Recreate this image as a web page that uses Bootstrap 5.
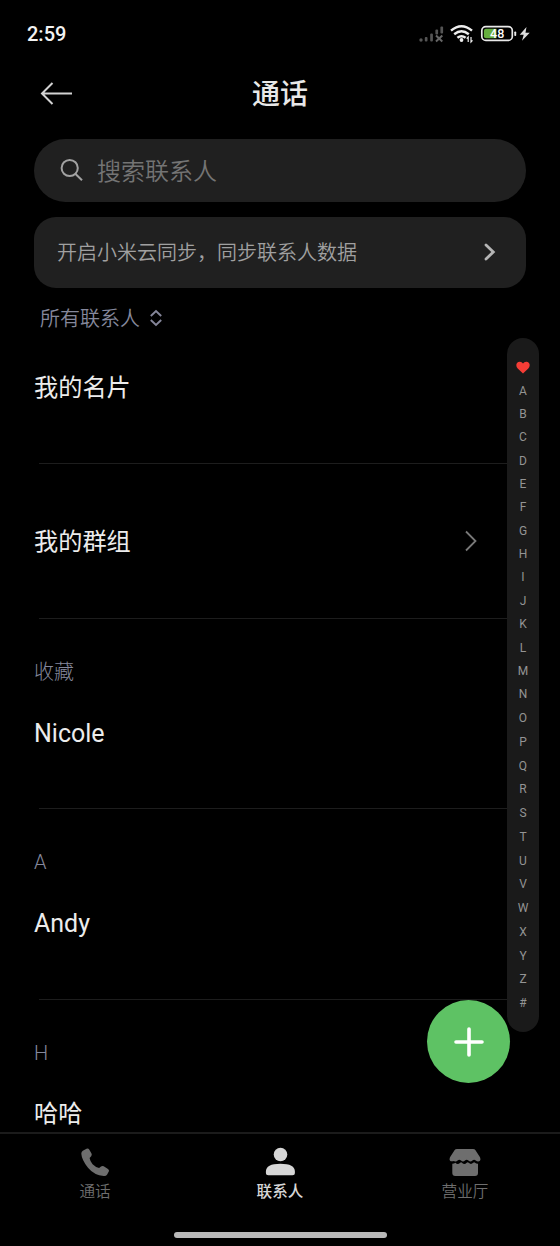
<!DOCTYPE html>
<html lang="zh-CN">
<head>
<meta charset="utf-8">
<meta name="viewport" content="width=device-width, initial-scale=1">
<title>通话</title>
<link href="https://cdn.jsdelivr.net/npm/bootstrap@5.3.0/dist/css/bootstrap.min.css" rel="stylesheet">
<style>
body { background:#000; color:#e8e8e8; font-family:Roboto,"Noto Sans CJK SC",sans-serif; font-weight:400; }
svg { display:block; flex:none; }
.screen { height:1246px; }
.statusbar { height:66px; padding:2px 28px 0 27px; }
.clock { font:500 20px/24px Roboto,sans-serif; color:#f2f2f2; }
.topbar { height:56px; padding:0 40px; }
.topbar h1 { font-size:28px; line-height:40px; font-weight:500; padding-top:3px; }
.side { width:33px; }
.search { height:63px; margin:17px 34px 0; padding:0 26px; border-radius:31.5px; background:#202020; color:#747474; font-size:24px; font-weight:350; gap:14px; }
.search span { padding-top:3px; }
.sync { height:71px; margin:15px 34px 0; padding:0 30px 0 23px; border-radius:22px; background:#202020; color:#a0a0a0; font-size:20px; font-weight:350; }
.sync span { padding-top:2px; }
.filter { height:52px; padding:8px 40px 0; gap:10px; color:#85889c; font-size:20px; font-weight:350; line-height:30px; }
.filter span { padding-top:2px; }
.contacts { height:793px; }
.entry { margin-left:39px; margin-right:53px; border-bottom:1px solid #1d1d1d; }
.entry > * { margin-left:-5px; }
.own-card { height:124px; padding-top:30px; }
.groups { height:155px; padding-right:30px; }
.groups .person { padding-top:3px; }
.group-block { height:190.5px; padding-top:38px; }
.tag { font-size:20px; line-height:30px; font-weight:300; color:#85889c; }
.person { font-size:24.2px; line-height:36px; color:#ececec; }
.latin { font-size:25px; }
.tag + .person { margin-top:28px; }
.tag + .latin { margin-top:29px; }
.az { top:338px; left:507px; width:32px; height:694px; padding-top:18.2px; border-radius:16px; background:#1a1a1a; color:#949494; font-size:12px; }
.az span { height:23.37px; line-height:23.37px; flex:none; }
.az span:nth-child(n+15) { height:23.78px; line-height:23.78px; }
.fab { top:1000px; left:427px; width:83px; height:83px; background:#5ec264; border:0; }
.tabs { height:114px; border-top:2px solid #1b1b1b; color:#6e6e6e; }
.tabs a { color:inherit; font-size:15.6px; line-height:22px; width:70px; }
.tabs a span { padding-top:2px; font-weight:350; }
.tabs .current { color:#d6d6d6; }
.tabs .current span { font-weight:500; }
.tabrow { padding:13px 60px 0 60px; }
.homebar { width:213px; height:6px; border-radius:3px; background:#b9b9b9; margin-bottom:8px; }
</style>
</head>
<body>
<div class="screen position-relative d-flex flex-column overflow-hidden">
  <header class="statusbar d-flex align-items-center justify-content-between">
    <span class="clock">2:59</span>
    <svg width="114" height="24" viewBox="418 22 114 24">
      <g fill="#555"><circle cx="421" cy="40" r="1.7"/><rect x="424.8" y="37" width="2.7" height="4.5" rx="1"/><rect x="430.2" y="33.5" width="2.7" height="8" rx="1"/><rect x="435.4" y="29.5" width="2.7" height="5" rx="1"/><rect x="440.4" y="26.5" width="2.7" height="7" rx="1"/></g>
      <path d="M436 35.5l6.3 6M442.3 35.5l-6.3 6" stroke="#666" stroke-width="2"/>
      <g fill="none" stroke="#eee" stroke-width="2.4"><path d="M451 30.700q10.500-8.800 21 0"/><path d="M454.200 34.300q7.300-6 14.600 0"/><path d="M457.400 37.800q4.100-3.300 8.200 0"/></g>
      <circle cx="461.500" cy="40" r="1.900" fill="#eee"/>
      <path d="M468.200 42v-5l-1.500 1.700M471 37v5l1.500-1.700" fill="none" stroke="#eee" stroke-width="1.200"/>
      <rect x="481.800" y="26.700" width="30.500" height="13.700" rx="4" fill="#000" stroke="#e9e9e9" stroke-width="1.700"/>
      <path d="M486 28.800h10.500v9.500H486q-2.100 0-2.100-2v-5.500q0-2 2.100-2z" fill="#65ad3e"/>
      <rect x="514.300" y="31.500" width="1.900" height="4.500" rx=".8" fill="#e9e9e9"/>
      <text x="497.200" y="38" text-anchor="middle" font-family="Roboto,sans-serif" font-size="12.500" font-weight="500" fill="#fff">48</text>
      <path d="M526.500 27l-6.800 7.700h4l-1.700 6 7.700-7.900h-4.200z" fill="#ddd"/>
    </svg>
  </header>
  <div class="topbar d-flex align-items-center justify-content-between">
    <svg class="side" height="24" viewBox="0 0 33 24" fill="none" stroke="#d2d2d2" stroke-width="2"><path d="M32 11.500H2M12.500 1L2 11.500 12.500 22"/></svg>
    <h1 class="m-0">通话</h1>
    <span class="side"></span>
  </div>
  <div class="search d-flex align-items-center">
    <svg width="23" height="24" viewBox="0 0 23 24" fill="none" stroke="#a2a2a2" stroke-width="2"><circle cx="9.700" cy="10" r="8.100"/><path d="M15.300 15.800l6.700 6.500"/></svg>
    <span>搜索联系人</span>
  </div>
  <div class="sync d-flex align-items-center justify-content-between">
    <span>开启小米云同步，同步联系人数据</span>
    <svg width="12" height="18" viewBox="0 0 12 18" fill="none" stroke="#b5b5b5" stroke-width="2.800" stroke-linecap="round"><path d="M2 2l7.300 7L2 16"/></svg>
  </div>
  <div class="filter d-flex align-items-center">
    <span>所有联系人</span>
    <svg width="12" height="18" viewBox="0 0 12 18" fill="none" stroke="#85869a" stroke-width="1.900"><path d="M.8 7L6 2l5.200 5M.8 11L6 16l5.200-5"/></svg>
  </div>
  <main class="contacts overflow-hidden">
    <div class="entry own-card"><div class="person">我的名片</div></div>
    <div class="entry groups d-flex align-items-center justify-content-between">
      <div class="person">我的群组</div>
      <svg width="12" height="22" viewBox="0 0 12 22" fill="none" stroke="#797979" stroke-width="1.800"><path d="M1 1.500l9.500 9.500L1 20.500"/></svg>
    </div>
    <section class="entry group-block"><div class="tag">收藏</div><div class="person latin">Nicole</div></section>
    <section class="entry group-block"><div class="tag">A</div><div class="person latin">Andy</div></section>
    <section class="entry group-block"><div class="tag">H</div><div class="person">哈哈</div></section>
  </main>
  <nav class="tabs d-flex flex-column align-items-center justify-content-between">
    <div class="tabrow d-flex justify-content-between w-100">
      <a class="d-flex flex-column align-items-center text-decoration-none" href="#">
        <svg width="30" height="32" viewBox="0 0 30 32" fill="currentColor"><path d="M2.800 3.800l3.700-2q1.800-.8 2.700.8l2.300 4q.7 1.400-.3 2.600L9.600 11q.5 3.500 3 6.200t6.500 3.700l1.900-1.400q1.300-1 2.700-.2l4.300 2.600q1.600 1 .8 2.600l-1.800 3.200q-1 1.500-3.200 1.300-9.600-.8-15.800-8.300T1.300 6.800q0-2 1.500-3z"/></svg>
        <span>通话</span>
      </a>
      <a class="current d-flex flex-column align-items-center text-decoration-none" href="#">
        <svg width="30" height="32" viewBox="0 0 30 32" fill="currentColor"><circle cx="15.500" cy="7.500" r="6.800"/><path d="M.9 24.500q0-7.800 14.500-7.800t14.500 7.800v1.200q0 2.500-2.500 2.500h-24q-2.500 0-2.500-2.500z"/></svg>
        <span>联系人</span>
      </a>
      <a class="d-flex flex-column align-items-center text-decoration-none" href="#">
        <svg width="32" height="32" viewBox="0 0 32 32" fill="currentColor"><path d="M8 2h16q1.700 0 2.500 1.300l4.500 7q1 2.200 0 3.500-2.100 1.500-4.200-.4-1.700-1.400-3.400 0-2 2.300-4 0-1.700-1.400-3.400 0-2 2.300-4 0-1.700-1.400-3.400 0Q7 15.300 5 13.900 2.500 14.800 1 13.800q-1-1.300 0-3.500l4.500-7Q6.300 2 8 2z"/><path d="M3.300 16.700q1.800 0 3.200-1 2 2.500 4.700 0 1-.9 2 .3 2.300 2 4.500-.3.900-.9 2 .1 2.300 2.200 4.500 0 1-.9 1.800-.1 1.300 1.100 3 1V26q0 3-3 3H6.300q-3 0-3-3z"/></svg>
        <span>营业厅</span>
      </a>
    </div>
    <div class="homebar"></div>
  </nav>
  <div class="az position-absolute d-flex flex-column align-items-center">
    <span class="d-flex align-items-center"><svg width="14" height="13" viewBox="0 0 14 13"><path d="M7 12.500L1.700 7.600Q.3 6.200.3 4.100.5 1 3.700.7 5.800.6 7 2.400 8.200.6 10.300.7q3.200.3 3.400 3.400 0 2.100-1.400 3.500z" fill="#f43d36"/></svg></span>
    <span>A</span><span>B</span><span>C</span><span>D</span><span>E</span><span>F</span><span>G</span><span>H</span><span>I</span><span>J</span><span>K</span><span>L</span><span>M</span><span>N</span><span>O</span><span>P</span><span>Q</span><span>R</span><span>S</span><span>T</span><span>U</span><span>V</span><span>W</span><span>X</span><span>Y</span><span>Z</span><span>#</span>
  </div>
  <button class="fab position-absolute rounded-circle d-flex align-items-center justify-content-center p-0" type="button" aria-label="新建联系人">
    <svg width="30" height="30" viewBox="0 0 30 30" stroke="#fff" stroke-width="3.600" stroke-linecap="round"><path d="M15 2v26M2 15h26"/></svg>
  </button>
</div>
<script src="https://cdn.jsdelivr.net/npm/bootstrap@5.3.0/dist/js/bootstrap.bundle.min.js"></script>
</body>
</html>
